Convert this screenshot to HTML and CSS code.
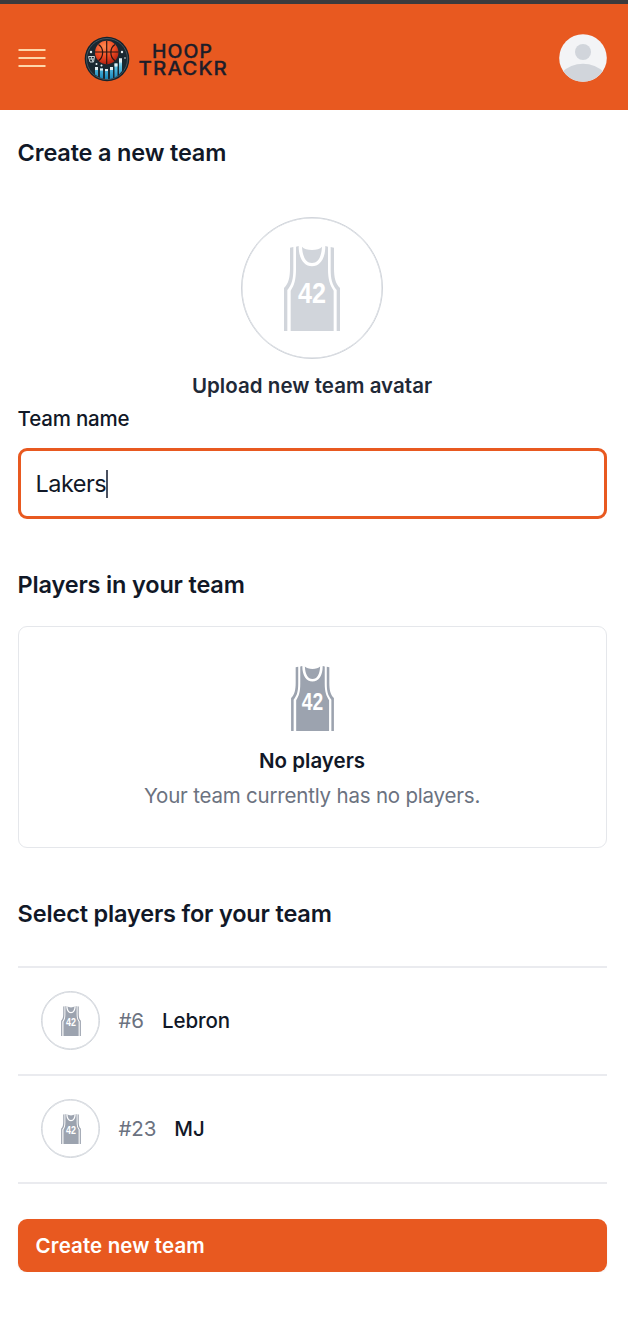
FILE: index.html
```html
<!DOCTYPE html>
<html lang="en">
<head>
<meta charset="utf-8">
<title>Hoop Trackr</title>
<link rel="stylesheet" href="styles.css">
</head>
<body>
<svg class="defs" width="0" height="0" aria-hidden="true">
  <symbol id="jersey" viewBox="0 0 168 255">
    <path fill="currentColor" d="M18 5 28 3V70C28 98 24 116 10 132V255H0V126C14 112 18 94 18 65ZM150 5 140 3V70C140 98 144 116 158 132V255H168V126C154 112 150 94 150 65Z"/>
    <path fill="currentColor" d="M36 2 44 0C44 38 60 61 84 61S124 38 124 0L132 2V70C132 100 138 118 149 134V255H20V134C31 118 36 100 36 70Z"/>
    <path fill="currentColor" d="M54 2C64 15 104 15 114 2C112 34 102 51 84 51S56 34 54 2Z"/>
    <text x="42" y="172" class="jersey-number" textLength="84" lengthAdjust="spacingAndGlyphs">42</text>
  </symbol>
</svg>
<header class="topbar">
  <svg class="menu" viewBox="0 0 28 20"><path d="M.5 2H27.500M.5 10H27.500M.5 18H27.500"/></svg>
  <svg class="logo" viewBox="0 0 144 46">
    <defs><radialGradient id="ball" cx=".4" cy=".25" r=".8"><stop offset="0" stop-color="#ff8a50"/><stop offset=".55" stop-color="#ee4a22"/><stop offset="1" stop-color="#a81c10"/></radialGradient>
    <linearGradient id="bar" x1="0" y1="0" x2="0" y2="1"><stop offset="0" stop-color="#d9f3fb"/><stop offset=".4" stop-color="#5cc0e2"/><stop offset="1" stop-color="#1685b8"/></linearGradient></defs>
    <circle cx="23" cy="23" r="22.300" fill="#14232d"/>
    <circle cx="23" cy="23" r="20.500" fill="#1a2831" stroke="#43535c" stroke-width="1"/>
    <circle cx="22.700" cy="16.500" r="11.700" fill="url(#ball)"/>
    <path fill="none" stroke="#2b1512" stroke-width="1.200" d="M22.700 4.800V28M11 16H34.400M14.500 8.500C20 12 20 21 14.500 24.800M31 8.500C25.500 12 25.500 21 31 24.800"/>
    <path fill="url(#bar)" d="M11 31h3v9.500l-3-2ZM16 32.500h3v10l-3-1ZM21 33h3v10h-3ZM26 31h3v11l-3 1ZM30.500 27.500h3V40l-3 1.500ZM35 22.500h3V35l-3 3.500Z"/>
    <path fill="#e2eef1" d="M11 31h3v3h-3ZM16 32.500h3v2h-3ZM21 33h3v2h-3ZM26 31h3v3h-3ZM30.500 27.500h3v3h-3ZM35 22.500h3v4h-3Z"/>
    <path fill="none" stroke="#c6d0d3" stroke-width="1" d="M4.500 20.500H10.500L9.500 26H6ZM6 23H10M7 20.500 9 26"/>
    <g fill="#e7f0f2"><circle cx="7" cy="16" r="1.200"/><circle cx="38" cy="16" r="1.200"/><circle cx="12.500" cy="28" r="1"/><circle cx="17.500" cy="29.500" r="1"/><circle cx="41" cy="22" r=".8"/></g>
    <text class="wordmark" x="68" y="22.300" textLength="61" lengthAdjust="spacingAndGlyphs">HOOP</text>
    <text class="wordmark" x="54.500" y="39" textLength="89.500" lengthAdjust="spacingAndGlyphs">TRACKR</text>
  </svg>
  <svg class="profile" viewBox="0 0 48 48">
    <clipPath id="round"><circle cx="24" cy="24" r="23.800"/></clipPath>
    <g clip-path="url(#round)"><path fill="#f3f4f6" d="M0 0h48v48H0Z"/><circle cx="24" cy="18" r="8" fill="#d1d5db"/><circle cx="24" cy="60" r="30.300" fill="#d1d5db"/></g>
  </svg>
</header>
<main class="page">
  <h2 class="heading">Create a new team</h2>
  <div class="upload">
    <div class="avatar avatar-lg"><svg class="jersey"><use href="#jersey"/></svg></div>
    <span class="upload-label">Upload new team avatar</span>
  </div>
  <label class="label">Team name</label>
  <div class="field"><span class="value">Lakers</span><span class="caret"></span></div>
  <h2 class="heading players-heading">Players in your team</h2>
  <section class="empty">
    <svg class="jersey"><use href="#jersey"/></svg>
    <h3 class="empty-title">No players</h3>
    <p class="empty-text">Your team currently has no players.</p>
  </section>
  <h2 class="heading select-heading">Select players for your team</h2>
  <ul class="players">
    <li class="player"><div class="avatar"><svg class="jersey"><use href="#jersey"/></svg></div><span class="number">#6</span><span class="name">Lebron</span></li>
    <li class="player"><div class="avatar"><svg class="jersey"><use href="#jersey"/></svg></div><span class="number">#23</span><span class="name">MJ</span></li>
  </ul>
  <button class="submit">Create new team</button>
</main>
</body>
</html>
```
FILE: styles.css
```css
* { box-sizing: border-box; margin: 0; }
body { background: #fff; color: #111827; font-family: Inter, "Liberation Sans", sans-serif; font-size: 20.5px; line-height: 30px; }
.defs { display: block; height: 0; }
.topbar { display: flex; align-items: center; height: 110.400px; padding: 1px 21px 0 18px; background: #e85920; border-top: 4px solid #3b3b3d; }
.menu { width: 28px; height: 20px; fill: none; stroke: #fed7aa; stroke-width: 2; }
.logo { width: 144px; height: 46px; margin: 2px 0 0 38px; }
.wordmark { font: 500 18px Inter, sans-serif; letter-spacing: 1px; fill: #1d1d29; stroke: #1d1d29; stroke-width: .3px; }
.profile { width: 48px; height: 48px; margin-left: auto; }
.page { display: flex; flex-direction: column; padding: 25px 21.500px 0 17.600px; }
.heading { font-size: 23.5px; line-height: 36px; font-weight: 600; letter-spacing: -.17px; }
.upload { display: flex; flex-direction: column; align-items: center; margin-top: 46px; }
.avatar { display: flex; align-items: center; justify-content: center; flex: none; width: 59px; height: 59px; border: 1px solid #d1d5db; border-radius: 50%; box-shadow: inset 0 0 0 .5px #d1d5db; color: #9ca3af; }
.avatar-lg { width: 142px; height: 142px; color: #d1d5db; }
.jersey { width: 20px; height: 30px; }
.avatar-lg .jersey { width: 56px; height: 85px; }
.jersey-number { font: 700 91px "Liberation Sans", sans-serif; fill: #fff; }
.upload-label { margin-top: 12px; font-weight: 600; color: #1f2937; letter-spacing: .04px; }
.label { margin-top: 3px; font-weight: 500; letter-spacing: -.2px; }
.field { display: flex; align-items: center; height: 71px; margin-top: 14px; padding: 0 15px; border: 3px solid #e85920; border-radius: 9px; font-size: 23.5px; letter-spacing: -.55px; }
.caret { width: 2px; height: 28px; background: #4b5160; }
.players-heading { margin-top: 48px; }
.empty { display: flex; flex-direction: column; align-items: center; height: 222px; margin-top: 23px; padding-top: 39px; border: 1px solid #e5e7eb; border-radius: 9px; }
.empty .jersey { width: 43px; height: 65px; color: #9ca3af; }
.empty-title { margin-top: 15px; font-size: 20.5px; font-weight: 600; }
.empty-text { margin-top: 5px; color: #6b7280; letter-spacing: -.2px; }
.select-heading { margin-top: 48px; }
.players { margin-top: 34px; padding: 0; list-style: none; border-top: 2px solid #eaebef; }
.player { display: flex; align-items: center; height: 108px; padding-left: 23.900px; border-bottom: 2px solid #eaebef; font-weight: 500; letter-spacing: -.1px; }
.player .avatar { margin-top: -1px; }
.number { margin-left: 18px; color: #6b7280; font-weight: 400; }
.name { margin-left: 18px; }
.submit { height: 53px; margin-top: 35px; padding: 0 18px; border: 0; border-radius: 9px; background: #e85920; color: #fff; font: 600 20.5px Inter, sans-serif; letter-spacing: .12px; text-align: left; box-shadow: 0 1px 2px rgba(0, 0, 0, .08); }
```
